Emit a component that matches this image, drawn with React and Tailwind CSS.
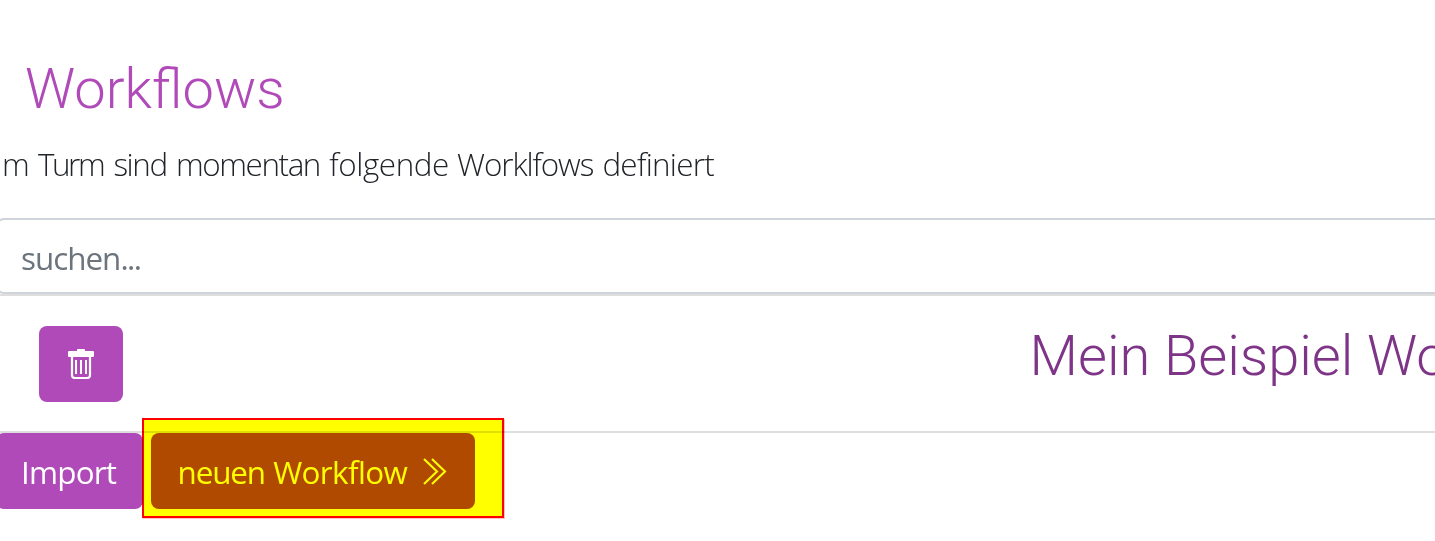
import React from "react";

function TrashIcon() {
  return (
    <svg className="block h-[30px] w-[27px]" viewBox="0 0 27 30" fill="none">
      <path d="M1 2H9V1Q9 0 10 0H16Q17 0 17 1V2H25Q26 2 26 3V7Q26 8 25 8H1Q0 8 0 7V3Q0 2 1 2Z" fill="currentColor" />
      <path d="M4 7.500V26Q4 29 7 29H19Q22 29 22 26V7.500" stroke="currentColor" strokeWidth="2.2" />
      <path d="M8 11V25M13 11V25M18 11V25" stroke="currentColor" strokeWidth="2" />
    </svg>
  );
}

function DoubleChevron() {
  return (
    <svg className="block h-[27px] w-[24px]" viewBox="0 0 24 27" fill="none" stroke="currentColor" strokeWidth="2.1">
      <path d="M1 1L14 13.500L1 26M9 1L22 13.500L9 26" />
    </svg>
  );
}

export default function App() {
  return (
    <main className="flex h-[541px] w-[1435px] flex-col overflow-hidden bg-white font-['Open_Sans','Noto_Sans',sans-serif] text-[31.4px] text-[#212529]">
      <h1 className="mt-[56px] ml-[25px] h-[67px] font-['Roboto',sans-serif] text-[56px] leading-[67px] font-light whitespace-nowrap text-[#b04ab8]">
        Workflows
      </h1>
      <p className="mt-[17px] ml-[2px] h-[48px] leading-[48px] font-light whitespace-nowrap">
        <span className="tracking-[-1px]">m</span>{" "}
        <span className="ml-px tracking-[-2.4px]">Turm</span>{" "}
        <span className="ml-[2px] tracking-[-1.4px]">sind</span>{" "}
        <span className="ml-px tracking-[-1.4px]">momentan</span>{" "}
        <span className="ml-px tracking-[-0.4px]">folgende</span>{" "}
        <span className="tracking-[-1.1px]">Worklfows</span>{" "}
        <span className="ml-px tracking-[-0.7px]">definiert</span>
      </p>
      <div className="mt-[30px] -ml-1 h-[78px] w-[1500px] border-b-2 border-[#dedede]">
        <div className="flex h-[76px] items-center rounded-lg border-2 border-[#ced4da] px-[23px] pt-1 text-[#6c757d]">
          <span className="tracking-[-1px]">suchen<span className="tracking-[-1.6px]">...</span></span>
        </div>
      </div>
      <div className="flex h-[137px] w-[1700px] shrink-0 items-start border-b-2 border-[#dedede] pt-[30px] pl-[39px]">
        <button className="flex h-[76px] w-[84px] items-center justify-center rounded-lg bg-[#b04ab8] text-white">
          <TrashIcon />
        </button>
        <h2 className="ml-[906.5px] font-['Roboto',sans-serif] text-[56px] leading-[60px] font-light whitespace-nowrap text-[#7f3587]">
          Mein Beispiel Workflow
        </h2>
      </div>
      <div className="relative -ml-1 flex h-[76px] gap-2">
        <button className="flex w-[147px] items-center rounded-lg bg-[#b04ab8] pt-px pl-[25px] tracking-[-0.8px] text-white">Import</button>
        <button className="flex w-[324px] items-center justify-between rounded-lg bg-[#b04ab8] pt-px pr-[28px] pl-[26.5px] whitespace-nowrap text-white">
          <span><span className="tracking-[-1.1px]">neuen</span> <span className="tracking-[-0.6px]">Workflow</span></span>
          <DoubleChevron />
        </button>
        <div className="absolute -top-[15px] left-[146px] h-[100px] w-[362px] border-2 border-[#ff0000] bg-[#ffff00] mix-blend-multiply shadow-[1px_1px_0_#ffc0c0]" />
      </div>
    </main>
  );
}
